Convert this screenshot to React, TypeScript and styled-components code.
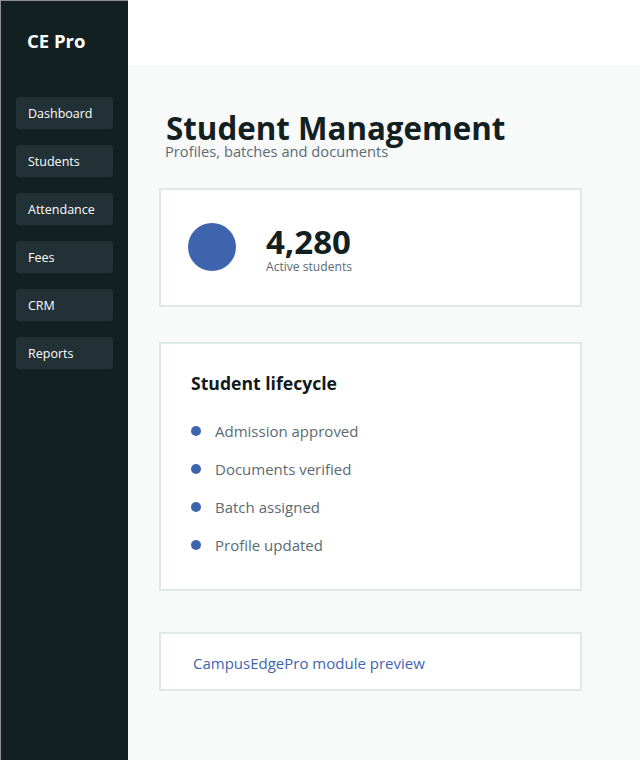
import React from "react";
import styled, { createGlobalStyle } from "styled-components";

const GlobalStyle = createGlobalStyle`
    html, body {
        margin: 0;
        padding: 0;
        background: #ffffff;
        font-family: "Open Sans", "Noto Sans", sans-serif;
    }
`;

const navItems = ["Dashboard", "Students", "Attendance", "Fees", "CRM", "Reports"];
const lifecycle = ["Admission approved", "Documents verified", "Batch assigned", "Profile updated"];

export default function App() {
    return (
        <>
            <GlobalStyle />
            <Page>
                <Sidebar>
                    <Logo>CE Pro</Logo>
                    <Nav>
                        {navItems.map((item) => (
                            <NavItem key={item}>{item}</NavItem>
                        ))}
                    </Nav>
                </Sidebar>
                <Column>
                    <TopBar />
                    <Main>
                        <Header>
                            <Title>Student Management</Title>
                            <Subtitle>Profiles, batches and documents</Subtitle>
                        </Header>
                        <StatCard>
                            <StatDot />
                            <div>
                                <StatValue>4,280</StatValue>
                                <StatLabel>Active students</StatLabel>
                            </div>
                        </StatCard>
                        <ListCard>
                            <CardTitle>Student lifecycle</CardTitle>
                            <List>
                                {lifecycle.map((item) => (
                                    <ListRow key={item}>
                                        <Bullet />
                                        {item}
                                    </ListRow>
                                ))}
                            </List>
                        </ListCard>
                        <PreviewCard>CampusEdgePro module preview</PreviewCard>
                    </Main>
                </Column>
            </Page>
        </>
    );
}

const Page = styled.div`
    display: flex;
    width: 640px;
    height: 760px;
    overflow: hidden;
`;

const Sidebar = styled.aside`
    box-sizing: border-box;
    width: 128px;
    flex-shrink: 0;
    background: #132022;
    border-top: 1px solid #8a9091;
    border-left: 1px solid #8a9091;
    padding: 0 15px;
`;

const Logo = styled.div`
    color: #ffffff;
    font-size: 18.5px;
    font-weight: 700;
    line-height: 24px;
    margin: 28px 0 0 11px;
`;

const Nav = styled.nav`
    display: flex;
    flex-direction: column;
    gap: 16px;
    margin-top: 44px;
`;

const NavItem = styled.div`
    box-sizing: border-box;
    width: 97px;
    height: 32px;
    padding-left: 12px;
    background: #223136;
    border-radius: 3px;
    color: #ffffff;
    font-size: 12.5px;
    line-height: 34px;
`;

const Column = styled.div`
    flex: 1;
    display: flex;
    flex-direction: column;
`;

const TopBar = styled.div`
    height: 65px;
    background: #ffffff;
`;

const Main = styled.main`
    flex: 1;
    background: #f8fafa;
    padding: 45px 58px 0 31px;
`;

const Header = styled.div`
    padding-left: 7px;
    height: 78px;
`;

const Title = styled.h1`
    margin: 0;
    color: #132022;
    font-size: 31.3px;
    font-weight: 700;
    line-height: 36px;
`;

const Subtitle = styled.p`
    margin: -5px 0 0 -1px;
    color: #5b6b72;
    font-size: 14.7px;
    line-height: 20px;
`;

const Card = styled.section`
    box-sizing: border-box;
    background: #ffffff;
    border: 2px solid #e1e8e8;
`;

const StatCard = styled(Card)`
    display: flex;
    align-items: center;
    gap: 30px;
    height: 119px;
    padding-left: 27px;
`;

const StatDot = styled.div`
    width: 48px;
    height: 48px;
    margin-bottom: 2px;
    border-radius: 50%;
    background: #3f64ae;
`;

const StatValue = styled.div`
    color: #132022;
    font-size: 33px;
    font-weight: 700;
    line-height: 37px;
    margin-top: 2px;
`;

const StatLabel = styled.div`
    color: #5b6b72;
    font-size: 12.1px;
    line-height: 14px;
`;

const ListCard = styled(Card)`
    height: 249px;
    margin-top: 35px;
    padding: 27px 30px 0;
`;

const CardTitle = styled.h2`
    margin: 0;
    color: #111a1c;
    font-size: 17.6px;
    font-weight: 700;
    line-height: 24px;
`;

const List = styled.ul`
    list-style: none;
    margin: 25px 0 0;
    padding: 0;
    display: flex;
    flex-direction: column;
    gap: 16px;
`;

const ListRow = styled.li`
    display: flex;
    align-items: center;
    gap: 14px;
    color: #5b6b72;
    font-size: 15px;
    line-height: 22px;
`;

const Bullet = styled.span`
    width: 10px;
    height: 10px;
    border-radius: 50%;
    background: #3f64ae;
`;

const PreviewCard = styled(Card)`
    height: 59px;
    margin-top: 41px;
    padding-left: 32px;
    color: #3f64ae;
    font-size: 15px;
    line-height: 59px;
`;
